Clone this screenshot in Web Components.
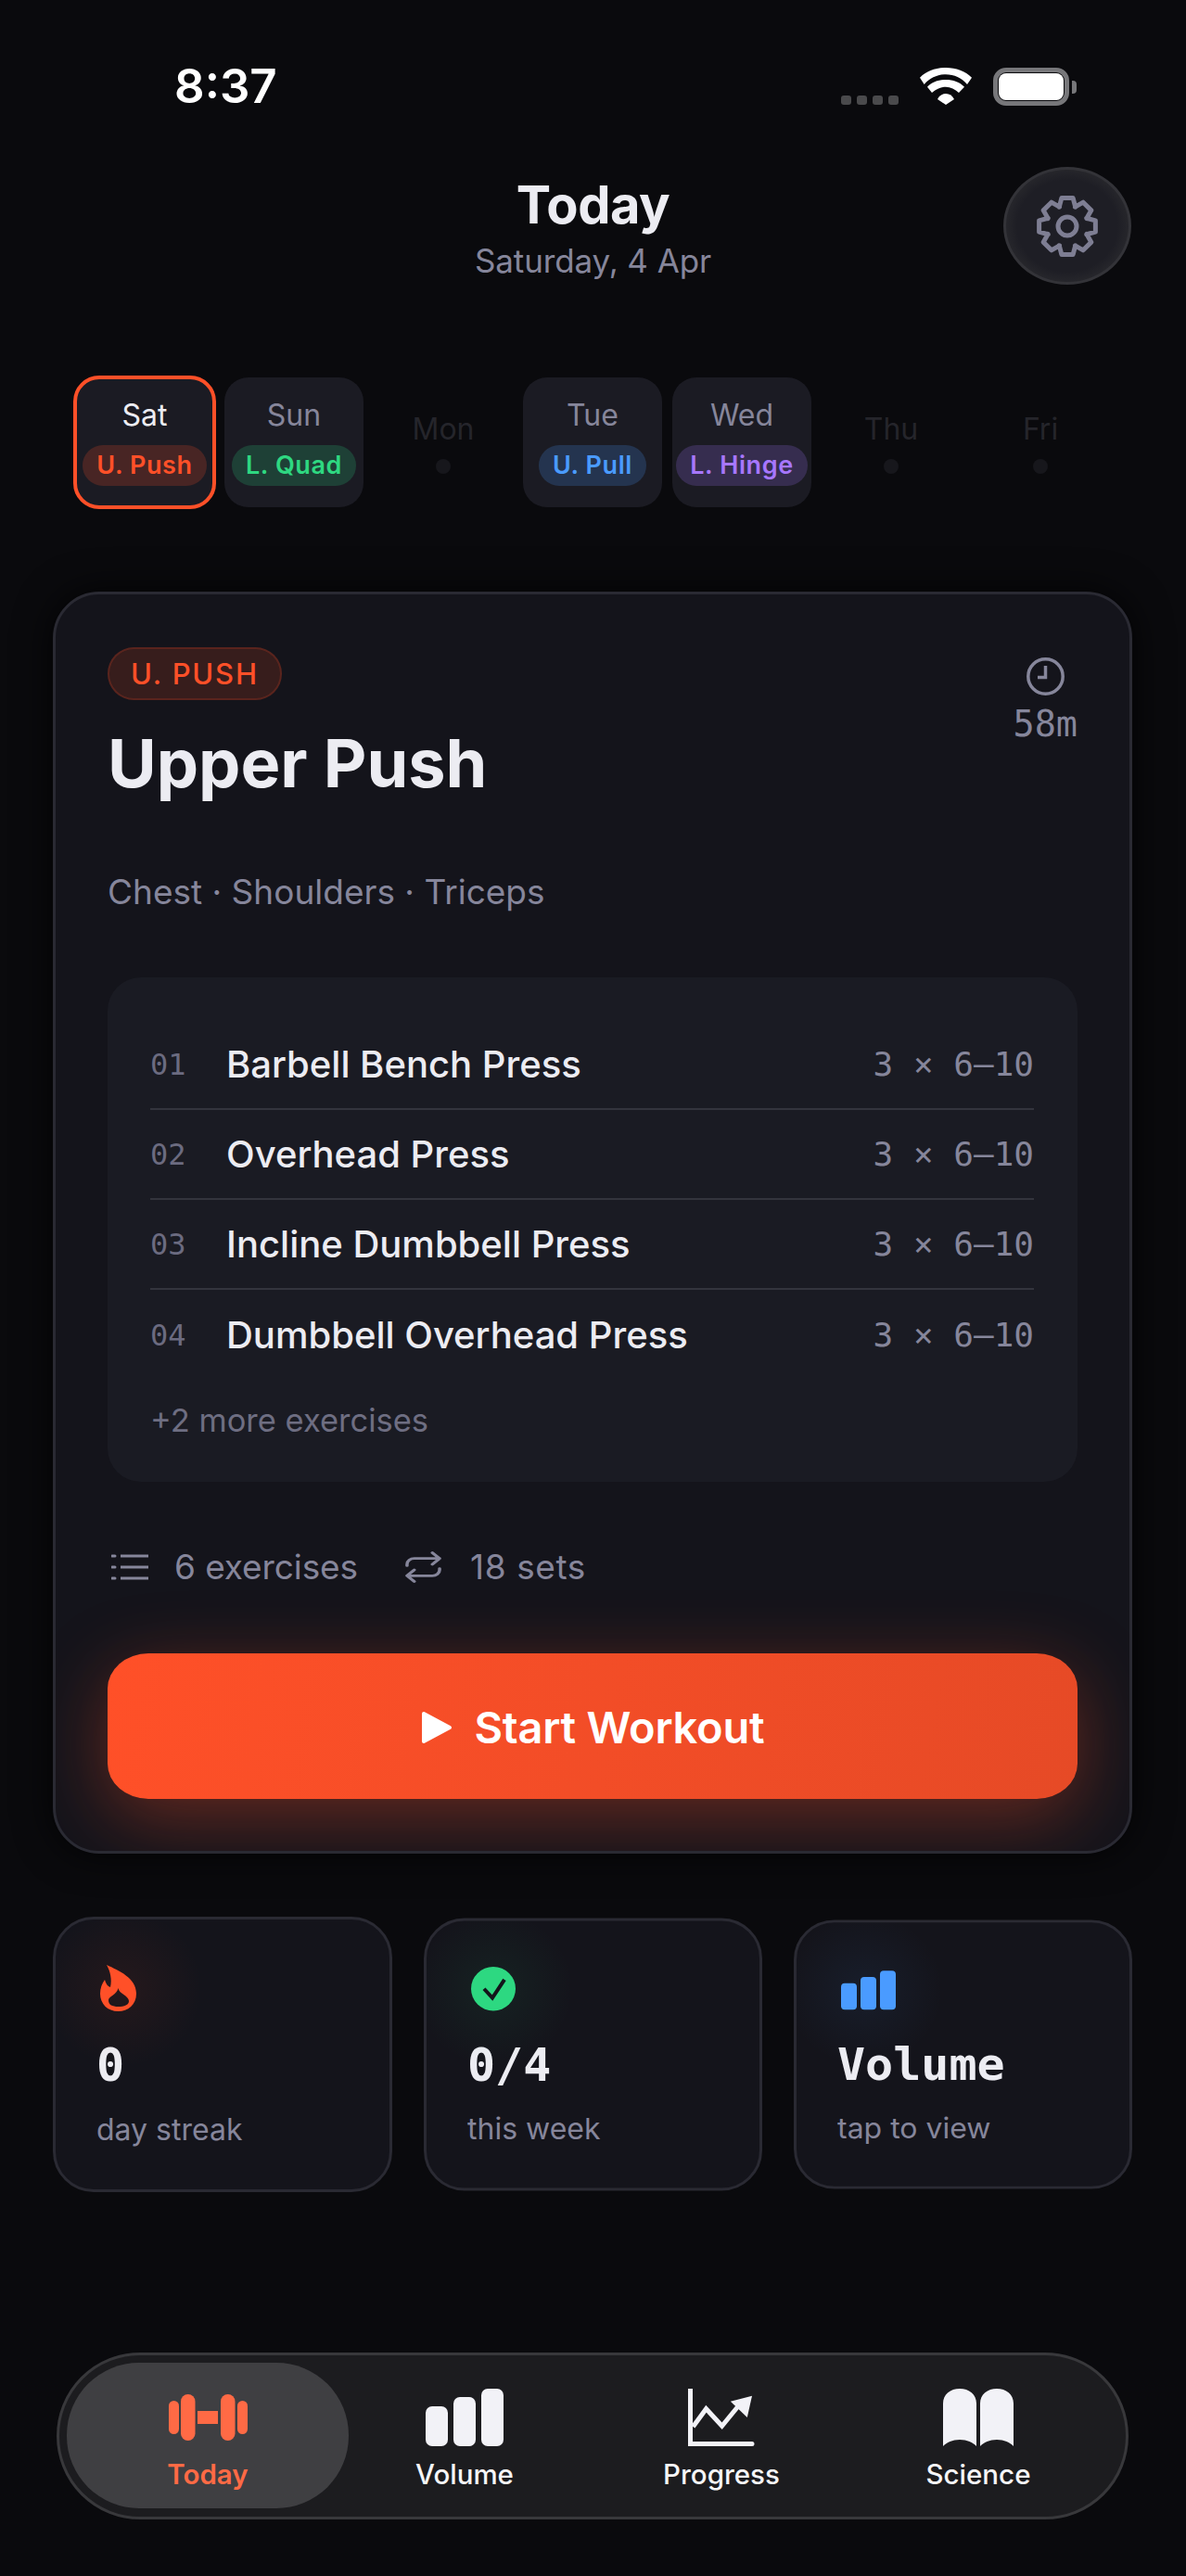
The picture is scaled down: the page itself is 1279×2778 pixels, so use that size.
<!DOCTYPE html>
<html lang="en">
<head>
<meta charset="utf-8">
<title>Today</title>
<style>
  html, body { margin: 0; background: #0a0a0d; }
  body { height: 2778px; overflow: hidden; font-family: Inter, "Noto Sans", sans-serif; color: #ececf2; }
</style>
</head>
<body>
<fit-app>
  <status-bar time="8:37"></status-bar>
  <today-header day="Saturday, 4 Apr"></today-header>
  <day-strip>
    <day-chip day="Sat" tag="U. Push" tint="255,80,40" selected></day-chip>
    <day-chip day="Sun" tag="L. Quad" tint="46,216,129"></day-chip>
    <day-chip day="Mon"></day-chip>
    <day-chip day="Tue" tag="U. Pull" tint="74,155,255"></day-chip>
    <day-chip day="Wed" tag="L. Hinge" tint="167,119,255"></day-chip>
    <day-chip day="Thu"></day-chip>
    <day-chip day="Fri"></day-chip>
  </day-strip>
  <workout-card tag="U. PUSH" name="Upper Push" minutes="58m" muscles="Chest · Shoulders · Triceps">
    <exercise-row num="01" name="Barbell Bench Press" sets="3 × 6–10"></exercise-row>
    <exercise-row num="02" name="Overhead Press" sets="3 × 6–10"></exercise-row>
    <exercise-row num="03" name="Incline Dumbbell Press" sets="3 × 6–10"></exercise-row>
    <exercise-row num="04" name="Dumbbell Overhead Press" sets="3 × 6–10" last></exercise-row>
  </workout-card>
  <stat-row>
    <stat-card value="0" label="day streak" glow="255,80,40" squash="1">
      <svg width="39" height="50" viewBox="0 0 39 50"><path fill="#ff5028" fill-rule="evenodd" d="M7 0C20 6 39 14 39 31C39 43 30 50 19.5 50C8 50 0 42 0 31C0 25 2 20 5 16C6 20 8 23 11 24C13 16 11 7 7 0ZM19.5 25C20 31 31 33 31 39C31 43 26 45 19.5 45C13 45 9 43 9 38C9 34 18 32 19.5 25Z"/></svg>
    </stat-card>
    <stat-card value="0/4" label="this week" glow="46,216,129" squash=".99">
      <svg width="48" height="50" viewBox="0 0 48 50"><ellipse cx="24" cy="25" rx="24" ry="24" fill="#2dd881"/><path d="M14 25L23 35L36 15" fill="none" stroke="#14141b" stroke-width="4"/></svg>
    </stat-card>
    <stat-card value="Volume" label="tap to view" glow="74,155,255" squash=".977">
      <svg width="59" height="50" viewBox="0 0 59 50"><g fill="#4a9bff"><rect x="0" y="18" width="17" height="29" rx="4"/><rect x="21" y="11" width="17" height="36" rx="4"/><rect x="42" y="4" width="17" height="43" rx="4"/></g></svg>
    </stat-card>
  </stat-row>
  <tab-bar>
    <tab-item label="Today" active>
      <svg width="85" height="50" viewBox="0 0 85 50"><g fill="#ff6a45"><rect x="0" y="7" width="11" height="36" rx="5.5"/><rect x="13" y="0" width="15.5" height="50" rx="7.7"/><rect x="31" y="18" width="22" height="14"/><rect x="56" y="0" width="15.5" height="50" rx="7.7"/><rect x="74" y="7" width="11" height="36" rx="5.5"/></g></svg>
    </tab-item>
    <tab-item label="Volume">
      <svg width="84" height="62" viewBox="0 0 84 62"><g fill="#f2f2f7"><rect x="0" y="19" width="24" height="43" rx="7"/><rect x="30" y="9" width="24" height="53" rx="7"/><rect x="60" y="0" width="24" height="62" rx="7"/></g></svg>
    </tab-item>
    <tab-item label="Progress">
      <svg width="72" height="62" viewBox="0 0 72 62"><path d="M2.5 0V59.5H69" fill="none" stroke="#f2f2f7" stroke-width="5" stroke-linecap="round"/><path d="M5.4 41L19.5 21.7L36.6 40.3L54 19" fill="none" stroke="#f2f2f7" stroke-width="5"/><path d="M69 7.7L45.8 13.7L63.8 31Z" fill="#f2f2f7"/></svg>
    </tab-item>
    <tab-item label="Science">
      <svg width="76" height="62" viewBox="0 0 76 62"><g fill="#f2f2f7"><path d="M0 16C0 6 8 0 18 0S36 6 36 16V62C32 58 26 55 18 55S4 58 0 62Z"/><path d="M40 16C40 6 48 0 58 0S76 6 76 16V62C72 58 66 55 58 55S44 58 40 62Z"/></g></svg>
    </tab-item>
  </tab-bar>
</fit-app>

<script>
/**
 * Defines a custom element whose shadow root is filled from a render function.
 *
 * @param {string} tag The element name.
 * @param {string} css The styles of the shadow root.
 * @param {Function} render Gets the host, returns the markup.
 */
function define (tag, css, render) {
  customElements.define(tag, class extends HTMLElement {
    constructor () {
      super()
      this.attachShadow({ mode: 'open' })
    }

    connectedCallback () {
      this.shadowRoot.innerHTML = `<style>${css}</style>${render(this)}`
    }
  })
}

// Eight toothed gear, the teeth are rounded by the stroke join.
function gearPath () {
  const points = []
  for (let i = 0; i < 8; i++) {
    const mid = i * Math.PI / 4 - Math.PI / 2
    const steps = [[-0.40, 22.5], [-0.20, 31], [0.20, 31], [0.40, 22.5]]
    steps.forEach(([offset, radius]) => {
      const a = mid + offset
      points.push(`${(34 + radius * Math.cos(a)).toFixed(2)} ${(34 + radius * Math.sin(a)).toFixed(2)}`)
    })
  }
  return 'M' + points.join('L') + 'Z'
}

define('fit-app', `
  :host { display: flex; flex-direction: column; width: 1279px; height: 2778px; }
`, () => '<slot></slot>')

define('status-bar', `
  :host { display: flex; justify-content: space-between; height: 180px; box-sizing: border-box; padding: 66px 118px 0 188px; }
  .time { font: 600 51px/54px Inter, sans-serif; color: #fff; width: 120px; }
  .icons { display: flex; align-items: flex-start; padding-top: 7px; }
  .signal { display: flex; gap: 6px; margin: 30px 23px 0 0; }
  .signal i { width: 11px; height: 10px; border-radius: 3px; background: #4a4a4c; }
  .wifi { margin-right: 23px; }
  .battery { box-sizing: border-box; width: 82px; height: 41px; border: 5px solid #77777a; border-radius: 14px; padding: 1px; background: #0a0a0d; }
  .battery i { display: block; height: 100%; border-radius: 8px; background: #fff; }
  .nub { width: 5px; height: 14px; margin: 14px 0 0 3px; background: #77777a; border-radius: 0 4px 4px 0; }
`, host => `
  <div class="time">${host.getAttribute('time')}</div>
  <div class="icons">
    <div class="signal"><i></i><i></i><i></i><i></i></div>
    <svg class="wifi" width="56" height="40" viewBox="0 0 56 40" fill="#fff">
      <path d="M0 10.7C7 3.5 17 0 28 0S49 3.5 56 10.7L51 18C45 11 37 7.3 28 7.3S11 11 4.7 18Z"/>
      <path d="M8 20.7C13 15.5 20 13 28 13S43 15.5 48 20.7L42 27C38 23 33 20.7 28 20.7S18 23 13 27Z"/>
      <path d="M19 34C21 30 24 28 28 28S35 30 37 34L28 40Z"/>
    </svg>
    <div class="battery"><i></i></div>
    <div class="nub"></div>
  </div>
`)

define('today-header', `
  :host { display: grid; grid-template-columns: 1fr auto 1fr; height: 127px; padding: 0 59px 0; }
  .titles { grid-column: 2; text-align: center; }
  h1 { margin: 7px 0 0; font: 700 56px/68px Inter, sans-serif; color: #ececf2; letter-spacing: -0.5px; }
  p { margin: 4px 0 0; font: 400 35px/44px Inter, sans-serif; letter-spacing: -0.1px; color: #86869b; }
  button { grid-column: 3; justify-self: end; box-sizing: border-box; width: 138px; height: 127px; padding: 0; border: 3px solid #333338; border-radius: 50%; background: radial-gradient(closest-side, #1e1e25 82%, #26262b 100%); display: flex; align-items: center; justify-content: center; }
`, host => `
  <div class="titles">
    <h1>Today</h1>
    <p>${host.getAttribute('day')}</p>
  </div>
  <button aria-label="Settings">
    <svg width="68" height="68" viewBox="0 0 68 68" fill="none" stroke="#7e7e93" stroke-width="5" stroke-linejoin="round">
      <path d="${gearPath()}"/><circle cx="34" cy="34" r="10"/>
    </svg>
  </button>
`)

define('day-strip', `
  :host { display: grid; grid-template-columns: repeat(7, 150px); gap: 11px; margin-top: 100px; padding-left: 81px; height: 140px; }
`, () => '<slot></slot>')

define('day-chip', `
  :host { display: block; height: 140px; border-radius: 26px; }
  :host([tag]) { background: #1b1b23; }
  :host([selected]) { outline: 4px solid #ff5028; outline-offset: -2.5px; }
  .inner { display: flex; flex-direction: column; align-items: center; height: 100%; }
  .day { margin-top: 21px; font: 400 32px/40px Inter, sans-serif; color: #86869b; }
  :host([selected]) .day { color: #ececf2; }
  .pill { margin-top: 12px; height: 44px; padding: 0 15px; border-radius: 22px; font: 600 27px/44px Inter, sans-serif; letter-spacing: .6px; white-space: nowrap; }
  .rest .day { margin-top: 36px; color: #25252b; }
  .dot { width: 16px; height: 16px; margin-top: 12px; border-radius: 50%; background: #17171c; }
`, host => {
  const tag = host.getAttribute('tag')
  const tint = host.getAttribute('tint')
  if (!tag) return `<div class="inner rest"><div class="day">${host.getAttribute('day')}</div><div class="dot"></div></div>`
  return `<div class="inner">
    <div class="day">${host.getAttribute('day')}</div>
    <div class="pill" style="color: rgb(${tint}); background: rgba(${tint}, .2)">${tag}</div>
  </div>`
})

define('exercise-row', `
  :host { display: flex; align-items: center; height: 97px; box-sizing: border-box; border-bottom: 2px solid #33343d; }
  :host([last]) { border-bottom: 0; }
  .num { width: 82px; font: 400 32px/40px "DejaVu Sans Mono", monospace; color: #6b6b80; }
  .name { flex: 1; font: 500 40px/50px Inter, sans-serif; color: #ececf2; }
  .sets { font: 400 36px/40px "DejaVu Sans Mono", monospace; color: #86869b; }
`, host => `
  <span class="num">${host.getAttribute('num')}</span>
  <span class="name">${host.getAttribute('name')}</span>
  <span class="sets">${host.getAttribute('sets')}</span>
`)

define('workout-card', `
  :host { display: block; margin: 91px 58px 0 57px; height: 1361px; box-sizing: border-box; padding: 57px 56px 56px; border: 3px solid #2a2a33; border-radius: 50px; background: #14141b; overflow: hidden; box-shadow: 0 0 40px rgba(0, 0, 0, .8); }
  .top { display: flex; justify-content: space-between; height: 168px; }
  .badge { display: inline-block; box-sizing: border-box; height: 57px; padding: 0 23px; border: 2px solid rgba(255, 80, 40, .18); border-radius: 29px; background: rgba(255, 80, 40, .15); font: 500 31px/53px Inter, sans-serif; letter-spacing: 1.8px; color: #ff5028; }
  h2 { margin: 25px 0 0; font: 700 72px/86px Inter, sans-serif; color: #ececf2; }
  .time { display: flex; flex-direction: column; align-items: center; }
  .time svg { margin-top: 11px; }
  .time span { margin-top: 9px; font: 400 38.5px/44px "DejaVu Sans Mono", monospace; color: #86869b; }
  .muscles { margin-top: 72px; font: 400 37px/48px Inter, sans-serif; color: #86869b; }
  .panel { margin-top: 68px; padding: 46px 47px 44px 46px; border-radius: 36px; background: #1a1b23; }
  .more { margin-top: 22px; font: 400 34.5px/44px Inter, sans-serif; color: #6e6e82; }
  .meta { display: flex; align-items: center; height: 44px; margin-top: 70px; font: 400 37px/44px Inter, sans-serif; color: #86869b; }
  .meta svg { flex: none; }
  .list { margin-left: 4px; }
  .gap-a { margin: 0 4px 0 28px; letter-spacing: -0.1px; }
  .gap-b { margin: 0 31px 0 47px; }
  .sets { letter-spacing: .6px; }
  button { display: flex; align-items: center; justify-content: center; gap: 24px; width: 100%; height: 157px; margin-top: 71px; padding: 3px 0 0; border: 0; border-radius: 44px / 38px; background: linear-gradient(100deg, #ff5028, #e64a26); box-shadow: 0 20px 80px rgba(255, 80, 40, .35); font: 600 47px/60px Inter, sans-serif; letter-spacing: -0.2px; color: #fff; }
`, host => `
  <div class="top">
    <div>
      <span class="badge">${host.getAttribute('tag')}</span>
      <h2>${host.getAttribute('name')}</h2>
    </div>
    <div class="time">
      <svg width="41" height="41" viewBox="0 0 41 41" fill="none" stroke="#86869b" stroke-width="3.5"><circle cx="20.5" cy="20.5" r="18.7"/><path d="M20.5 9V21.5H12"/></svg>
      <span>${host.getAttribute('minutes')}</span>
    </div>
  </div>
  <div class="muscles">${host.getAttribute('muscles')}</div>
  <div class="panel">
    <slot></slot>
    <div class="more">+2 more exercises</div>
  </div>
  <div class="meta">
    <svg class="list" width="40" height="28" viewBox="0 0 40 28" fill="none" stroke="#86869b" stroke-width="3"><path d="M10 2H40M10 14H40M10 26H40"/><path d="M1 2H4M1 14H4M1 26H4" stroke-linecap="round"/></svg>
    <span class="gap-a">6 exercises</span>
    <svg class="gap-b" width="39" height="34" viewBox="2 1 20 22" preserveAspectRatio="none" fill="none" stroke="#86869b" stroke-width="1.8" stroke-linecap="round" stroke-linejoin="round"><path d="M17 2l4 4-4 4M3 11v-1a4 4 0 0 1 4-4h14M7 22l-4-4 4-4M21 13v1a4 4 0 0 1-4 4H3"/></svg>
    <span class="sets">18 sets</span>
  </div>
  <button>
    <svg width="34" height="36" viewBox="0 0 34 36"><path d="M3 3L31 18L3 33Z" fill="#fff" stroke="#fff" stroke-width="4" stroke-linejoin="round"/></svg>
    Start Workout
  </button>
`)

define('stat-row', `
  :host { display: grid; grid-template-columns: 366px 365px 365px; gap: 34px; margin: 68px 58px 0 57px; height: 297px; }
`, () => '<slot></slot>')

define('stat-card', `
  :host { display: block; box-sizing: border-box; height: 297px; padding: 49px 0 0 44px; border: 3px solid #2a2a33; border-radius: 44px; background: #14141b; overflow: hidden; }
  .icon { position: relative; height: 50px; margin-left: 4px; }
  .icon::before { content: ""; position: absolute; left: -60px; top: -60px; width: 170px; height: 170px; }
  .icon ::slotted(svg) { position: relative; display: block; }
  .value { margin-top: 28px; font: 700 50px/60px "DejaVu Sans Mono", monospace; color: #ececf2; }
  .label { margin-top: 20px; font: 400 32px/40px Inter, sans-serif; color: #86869b; }
`, host => {
  const glow = host.getAttribute('glow')
  host.style.transform = `scaleY(${host.getAttribute('squash')})`
  return `
    <div class="icon"><style>.icon::before { background: radial-gradient(closest-side, rgba(${glow}, .07), rgba(${glow}, 0)); }</style><slot></slot></div>
    <div class="value">${host.getAttribute('value')}</div>
    <div class="label">${host.getAttribute('label')}</div>
  `
})

define('tab-bar', `
  :host { display: grid; grid-template-columns: repeat(4, 277px); box-sizing: border-box; width: 1156px; height: 180px; margin: 173px 0 0 61px; padding: 8px 0 0 21.5px; border: 3px solid #38383b; border-radius: 90px; background: #1c1c1f; }
`, () => '<slot></slot>')

define('tab-item', `
  :host { position: relative; display: flex; flex-direction: column; align-items: center; height: 157px; font: 500 29.5px/40px Inter, sans-serif; color: #f5f5f7; }
  :host([active]) { color: #ff6a45; font-weight: 600; }
  :host([active])::before { content: ""; position: absolute; left: -13.5px; right: -13.5px; top: 0; bottom: 0; border-radius: 78px; background: #3f3f42; }
  .icon { position: relative; display: flex; align-items: center; height: 62px; margin-top: 28px; }
  .label { position: relative; margin-top: 10px; }
`, host => `
  <div class="icon"><slot></slot></div>
  <div class="label">${host.getAttribute('label')}</div>
`)
</script>
</body>
</html>
